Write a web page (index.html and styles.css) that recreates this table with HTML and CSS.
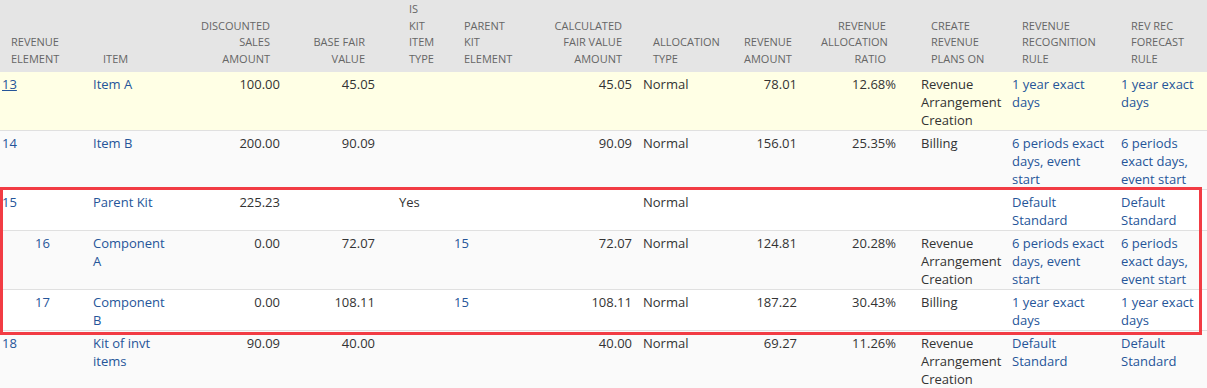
FILE: index.html
```html
<!DOCTYPE html>
<html>
<head>
<meta charset="utf-8">
<link rel="stylesheet" href="styles.css">
</head>
<body>
<div class="wrap">
<table class="grid">
<colgroup>
<col class="w1"><col class="w2"><col class="w3"><col class="w4"><col class="w5"><col class="w6"><col class="w7"><col class="w8"><col class="w9"><col class="w10"><col class="w11"><col class="w12"><col class="w13">
</colgroup>
<thead>
<tr>
<th>REVENUE<br>ELEMENT</th>
<th>ITEM</th>
<th>DISCOUNTED<br>SALES<br>AMOUNT</th>
<th>BASE FAIR<br>VALUE</th>
<th>IS<br>KIT<br>ITEM<br>TYPE</th>
<th>PARENT<br>KIT<br>ELEMENT</th>
<th>CALCULATED<br>FAIR VALUE<br>AMOUNT</th>
<th>ALLOCATION<br>TYPE</th>
<th>REVENUE<br>AMOUNT</th>
<th>REVENUE<br>ALLOCATION<br>RATIO</th>
<th>CREATE<br>REVENUE<br>PLANS ON</th>
<th>REVENUE<br>RECOGNITION<br>RULE</th>
<th>REV REC<br>FORECAST<br>RULE</th>
</tr>
</thead>
<tbody>
<tr class="hover">
<td><a class="ul" href="#">13</a></td>
<td><a href="#">Item A</a></td>
<td>100.00</td>
<td>45.05</td>
<td></td>
<td></td>
<td>45.05</td>
<td>Normal</td>
<td>78.01</td>
<td>12.68%</td>
<td>Revenue Arrangement Creation</td>
<td><a href="#">1 year exact days</a></td>
<td><a href="#">1 year exact days</a></td>
</tr>
<tr>
<td><a href="#">14</a></td>
<td><a href="#">Item B</a></td>
<td>200.00</td>
<td>90.09</td>
<td></td>
<td></td>
<td>90.09</td>
<td>Normal</td>
<td>156.01</td>
<td>25.35%</td>
<td>Billing</td>
<td><a href="#">6 periods exact days, event start</a></td>
<td><a href="#">6 periods exact days, event start</a></td>
</tr>
<tr>
<td><a href="#">15</a></td>
<td><a href="#">Parent Kit</a></td>
<td>225.23</td>
<td></td>
<td>Yes</td>
<td></td>
<td></td>
<td>Normal</td>
<td></td>
<td></td>
<td></td>
<td><a href="#">Default Standard</a></td>
<td><a href="#">Default Standard</a></td>
</tr>
<tr>
<td class="child"><a href="#">16</a></td>
<td><a href="#">Component A</a></td>
<td>0.00</td>
<td>72.07</td>
<td></td>
<td><a href="#">15</a></td>
<td>72.07</td>
<td>Normal</td>
<td>124.81</td>
<td>20.28%</td>
<td>Revenue Arrangement Creation</td>
<td><a href="#">6 periods exact days, event start</a></td>
<td><a href="#">6 periods exact days, event start</a></td>
</tr>
<tr>
<td class="child"><a href="#">17</a></td>
<td><a href="#">Component B</a></td>
<td>0.00</td>
<td>108.11</td>
<td></td>
<td><a href="#">15</a></td>
<td>108.11</td>
<td>Normal</td>
<td>187.22</td>
<td>30.43%</td>
<td>Billing</td>
<td><a href="#">1 year exact days</a></td>
<td><a href="#">1 year exact days</a></td>
</tr>
<tr>
<td><a href="#">18</a></td>
<td><a href="#">Kit of invt items</a></td>
<td>90.09</td>
<td>40.00</td>
<td></td>
<td></td>
<td>40.00</td>
<td>Normal</td>
<td>69.27</td>
<td>11.26%</td>
<td>Revenue Arrangement Creation</td>
<td><a href="#">Default Standard</a></td>
<td><a href="#">Default Standard</a></td>
</tr>
</tbody>
</table>
<div class="highlight"></div>
</div>
</body>
</html>
```
FILE: styles.css
```css
html, body {
  margin: 0;
  padding: 0;
  background: #fff;
  font-family: "Open Sans", "Liberation Sans", sans-serif;
}

.wrap {
  position: relative;
  width: 1207px;
}

.grid {
  width: 1207px;
  border-collapse: collapse;
  table-layout: fixed;
}

.w1 { width: 92px; }
.w2 { width: 80px; }
.w3 { width: 118px; }
.w4 { width: 95px; }
.w5 { width: 68px; }
.w6 { width: 77px; }
.w7 { width: 112px; }
.w8 { width: 88px; }
.w9 { width: 77px; }
.w10 { width: 99px; }
.w11 { width: 105px; }
.w12 { width: 109px; }
.w13 { width: 87px; }

.grid th {
  background: #e5e5e5;
  color: #666;
  font-size: 11px;
  font-weight: normal;
  line-height: 16.5px;
  text-align: left;
  vertical-align: bottom;
  white-space: nowrap;
  padding: 1px 14px 5px 11px;
}

.grid td {
  font-size: 13px;
  line-height: 18px;
  color: #333;
  text-align: left;
  vertical-align: top;
  padding: 3px 4px 1px 1px;
  border-bottom: 1px solid #e0e0e0;
}

/* right-aligned numeric columns */
.grid th:nth-child(3),
.grid th:nth-child(4),
.grid th:nth-child(7),
.grid th:nth-child(9),
.grid th:nth-child(10) {
  text-align: right;
  padding-left: 14px;
  padding-right: 20px;
}

.grid td:nth-child(3),
.grid td:nth-child(4),
.grid td:nth-child(7),
.grid td:nth-child(9),
.grid td:nth-child(10) {
  text-align: right;
  padding-left: 4px;
  padding-right: 10px;
}

.grid td:nth-child(1) { padding-left: 2px; }
.grid th:nth-child(1) { padding-left: 11px; }

.grid td:nth-child(5) { padding-left: 14px; }
.grid th:nth-child(5) { padding-left: 24px; }

.grid td:nth-child(11) { padding-left: 15px; }
.grid th:nth-child(11) { padding-left: 25px; }

.grid td:nth-child(12) { padding-right: 14px; }
.grid td:nth-child(13) { padding-right: 6px; }

.grid td.child { padding-left: 35px; }

.grid tbody tr:nth-child(even) td { background: #fafafa; }
.grid tbody tr:nth-child(odd) td { background: #fff; }
.grid tbody tr.hover td { background: #ffffe5; }

.grid a {
  color: #255599;
  text-decoration: none;
}

.grid a.ul {
  text-decoration: underline;
}

.highlight {
  position: absolute;
  left: 0;
  top: 187px;
  width: 1202px;
  height: 148px;
  box-sizing: border-box;
  border: 3px solid #f23c44;
  pointer-events: none;
}
```
